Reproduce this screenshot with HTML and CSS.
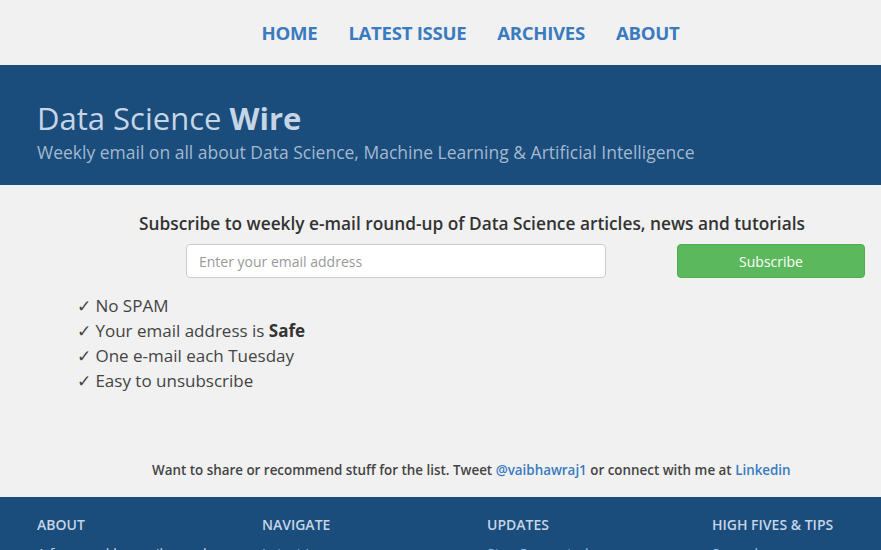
FILE: index.html
```html
<!DOCTYPE html>
<html>
<head>
<meta charset="utf-8">
<link rel="stylesheet" href="styles.css">
</head>
<body>
<nav class="topnav">
  <a href="#">HOME</a>
  <a href="#">LATEST ISSUE</a>
  <a href="#">ARCHIVES</a>
  <a href="#">ABOUT</a>
</nav>
<header class="banner">
  <h1 class="title">Data Science <b>Wire</b></h1>
  <p class="tagline">Weekly email on all about Data Science, Machine Learning &amp; Artificial Intelligence</p>
</header>
<main class="main">
  <h2 class="sub-heading">Subscribe to weekly e-mail round-up of Data Science articles, news and tutorials</h2>
  <form class="sub-form">
    <input class="email" type="text" placeholder="Enter your email address">
    <button class="btn" type="button">Subscribe</button>
  </form>
  <ul class="checks">
    <li>✓ No SPAM</li>
    <li>✓ Your email address is <b>Safe</b></li>
    <li>✓ One e-mail each Tuesday</li>
    <li>✓ Easy to unsubscribe</li>
  </ul>
  <p class="share">Want to share or recommend stuff for the list. Tweet <a href="#">@vaibhawraj1</a> or connect with me at <a href="#">Linkedin</a></p>
</main>
<footer class="footer">
  <div class="fcol"><h4>ABOUT</h4><p>A free weekly email round-up</p></div>
  <div class="fcol"><h4>NAVIGATE</h4><p><a href="#">Latest Issue</a></p></div>
  <div class="fcol"><h4>UPDATES</h4><p><a href="#">Stay Connected</a></p></div>
  <div class="fcol"><h4>HIGH FIVES &amp; TIPS</h4><p><a href="#">Spread</a></p></div>
</footer>
</body>
</html>
```
FILE: styles.css
```css
html, body { margin: 0; padding: 0; }
body {
  background: #f1f1f1;
  font-family: "Open Sans", "Noto Sans", sans-serif;
  color: #333;
  overflow: hidden;
}
.topnav {
  height: 64px;
  display: flex;
  justify-content: center;
  align-items: center;
  gap: 31px;
  padding-left: 60px;
  box-sizing: border-box;
  margin-bottom: 1px;
}
.topnav a {
  color: #3a7bbf;
  font-weight: 700;
  font-size: 18.6px;
  text-decoration: none;
  letter-spacing: -0.3px;
}
.banner {
  background: #1a4c7c;
  height: 120px;
  box-sizing: border-box;
  padding: 34px 37px 0;
}
.title {
  margin: 0;
  font-size: 31px;
  font-weight: 400;
  color: #c6d5e6;
  line-height: 38px;
}
.title b { font-weight: 700; }
.tagline {
  margin: 3px 0 0;
  font-size: 17.5px;
  color: #a3b9cf;
  line-height: 24px;
}
.main {
  height: 312px;
  box-sizing: border-box;
  padding-top: 27px;
}
.sub-heading {
  margin: 0 0 0 139px;
  font-size: 17.3px;
  font-weight: 600;
  line-height: 24px;
  color: #333;
}
.sub-form {
  display: flex;
  margin: 8px 0 0 186px;
  gap: 71px;
}
.email {
  width: 420px;
  height: 34px;
  box-sizing: border-box;
  border: 1px solid #ccc;
  border-radius: 4px;
  background: #fff;
  padding: 0 12px;
  font-family: inherit;
  font-size: 14px;
  color: #555;
}
.email::placeholder { color: #999; }
.btn {
  width: 188px;
  height: 34px;
  border: 1px solid #4cae4c;
  border-radius: 4px;
  background: #5cb85c;
  color: #fff;
  font-family: inherit;
  font-size: 14px;
}
.checks {
  list-style: none;
  margin: 15px 0 0 77px;
  padding: 0;
  font-size: 17px;
  line-height: 25px;
  color: #444;
}
.checks b { font-weight: 700; color: #333; }
.share {
  margin: 67px 0 0 152px;
  font-size: 13.4px;
  font-weight: 600;
  color: #444;
  line-height: 20px;
}
.share a { color: #3a7bbf; text-decoration: none; }
.footer {
  background: #1a4c7c;
  display: grid;
  grid-template-columns: repeat(4, 225px);
  padding: 18px 37px 0;
  height: 53px;
  overflow: hidden;
}
.fcol h4 {
  margin: 0;
  font-size: 14px;
  font-weight: 600;
  color: #c6d5e6;
  line-height: 20px;
}
.fcol p {
  margin: 9px 0 0;
  font-size: 14px;
  color: #c6d5e6;
}
.fcol a { color: #8ec0ec; text-decoration: none; }
```
